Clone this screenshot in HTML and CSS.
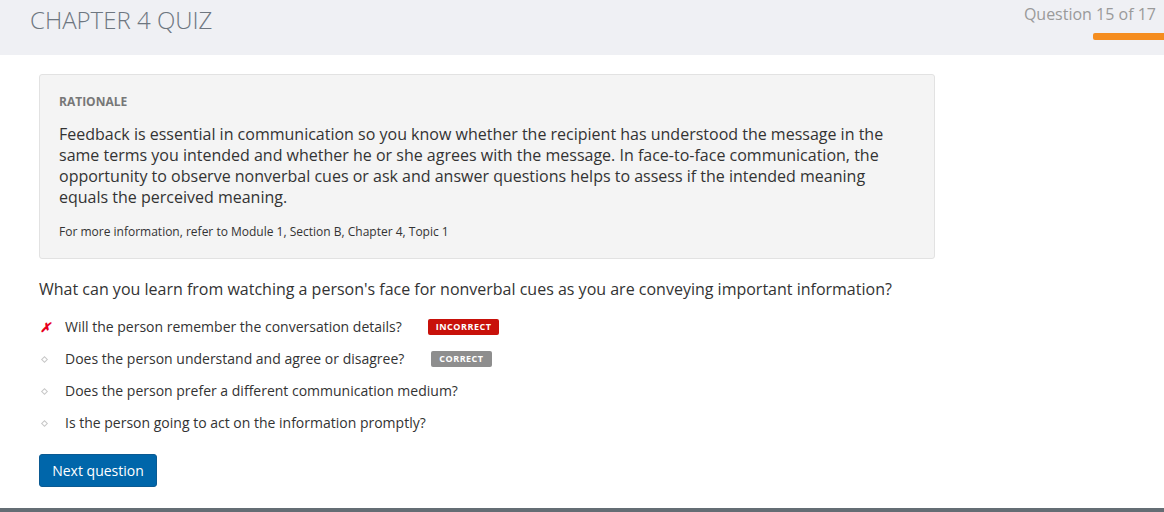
FILE: index.html
```html
<!DOCTYPE html>
<html>
<head>
<meta charset="utf-8">
<link rel="stylesheet" href="styles.css">
</head>
<body>
<header class="topbar">
  <h1 class="title">CHAPTER 4 QUIZ</h1>
  <div class="progress">
    <div class="progress-text">Question 15 of 17</div>
    <div class="progress-bar"></div>
  </div>
</header>
<main class="content">
  <section class="rationale">
    <h2 class="rationale-label">RATIONALE</h2>
    <p class="rationale-text">Feedback is essential in communication so you know whether the recipient has understood the message in the same terms you intended and whether he or she agrees with the message. In face-to-face communication, the opportunity to observe nonverbal cues or ask and answer questions helps to assess if the intended meaning equals the perceived meaning.</p>
    <p class="rationale-ref">For more information, refer to Module 1, Section B, Chapter 4, Topic 1</p>
  </section>
  <p class="question">What can you learn from watching a person's face for nonverbal cues as you are conveying important information?</p>
  <ul class="options">
    <li class="option"><span class="mark mark-x">&#10007;</span><span class="opt-text">Will the person remember the conversation details?</span><span class="badge badge-incorrect">INCORRECT</span></li>
    <li class="option"><span class="mark"><span class="dot"></span></span><span class="opt-text">Does the person understand and agree or disagree?</span><span class="badge badge-correct">CORRECT</span></li>
    <li class="option"><span class="mark"><span class="dot"></span></span><span class="opt-text">Does the person prefer a different communication medium?</span></li>
    <li class="option"><span class="mark"><span class="dot"></span></span><span class="opt-text">Is the person going to act on the information promptly?</span></li>
  </ul>
  <button class="next-btn">Next question</button>
</main>
<footer class="bottombar"></footer>
</body>
</html>
```
FILE: styles.css
```css
* { box-sizing: border-box; }
html, body { margin: 0; padding: 0; }
body {
  font-family: "Open Sans", "Noto Sans", sans-serif;
  background: #fff;
  color: #333;
  width: 1164px;
  height: 512px;
  overflow: hidden;
  display: flex;
  flex-direction: column;
}
.topbar {
  height: 55px;
  background: #eff0f4;
  display: flex;
  justify-content: space-between;
  align-items: flex-start;
  flex-shrink: 0;
}
.title {
  margin: 4px 0 0 30px;
  font-weight: 300;
  font-size: 24px;
  line-height: 32px;
  color: #6d7680;
}
.progress {
  display: flex;
  flex-direction: column;
  align-items: flex-end;
}
.progress-text {
  margin: 3px 8px 0 0;
  font-size: 16px;
  line-height: 22px;
  color: #9a9a9a;
}
.progress-bar {
  margin-top: 8px;
  width: 71px;
  height: 7px;
  background: #f58d1f;
  border-radius: 2px 0 0 2px;
}
.content {
  flex: 1;
  padding: 19px 39px 0;
}
.rationale {
  width: 896px;
  background: #f4f4f4;
  border: 1px solid #e2e2e2;
  border-radius: 3px;
  padding: 18px 19px 18px;
}
.rationale-label {
  margin: 0;
  font-size: 12px;
  font-weight: 700;
  line-height: 17px;
  color: #777;
}
.rationale-text {
  margin: 14px 0 0;
  font-size: 16px;
  line-height: 21px;
  color: #333;
}
.rationale-ref {
  margin: 15px 0 0;
  font-size: 12px;
  line-height: 17px;
  color: #333;
}
.question {
  margin: 19px 0 0;
  font-size: 16px;
  line-height: 22px;
  color: #333;
}
.options {
  list-style: none;
  margin: 11px 0 0;
  padding: 0;
}
.option {
  display: flex;
  align-items: center;
  height: 32px;
  font-size: 14px;
  color: #333;
}
.mark {
  width: 26px;
  display: flex;
  align-items: center;
  padding-left: 1px;
  color: #e00;
}
.mark-x {
  font-size: 13px;
  font-weight: 700;
  font-style: italic;
  color: #e8001c;
}
.dot {
  display: inline-block;
  width: 5px;
  height: 5px;
  margin-left: 2px;
  border: 1px solid #c8c8c8;
  transform: rotate(45deg);
}
.opt-text { line-height: 20px; }
.badge {
  display: inline-block;
  margin-left: 26px;
  height: 16px;
  padding: 0 8px;
  font-size: 9px;
  font-weight: 700;
  letter-spacing: 0.5px;
  line-height: 16px;
  color: #fff;
  border-radius: 2px;
}
.badge-incorrect { background: #c8110a; }
.badge-correct { background: #8e8e8e; margin-left: 27px; }
.next-btn {
  margin-top: 15px;
  width: 118px;
  height: 33px;
  background: #0066aa;
  border: 1px solid #0b5a92;
  border-radius: 3px;
  color: #fff;
  font-family: "Open Sans", "Noto Sans", sans-serif;
  font-size: 14px;
  padding: 0;
}
.bottombar {
  height: 4px;
  background: #646d74;
  flex-shrink: 0;
}
```
